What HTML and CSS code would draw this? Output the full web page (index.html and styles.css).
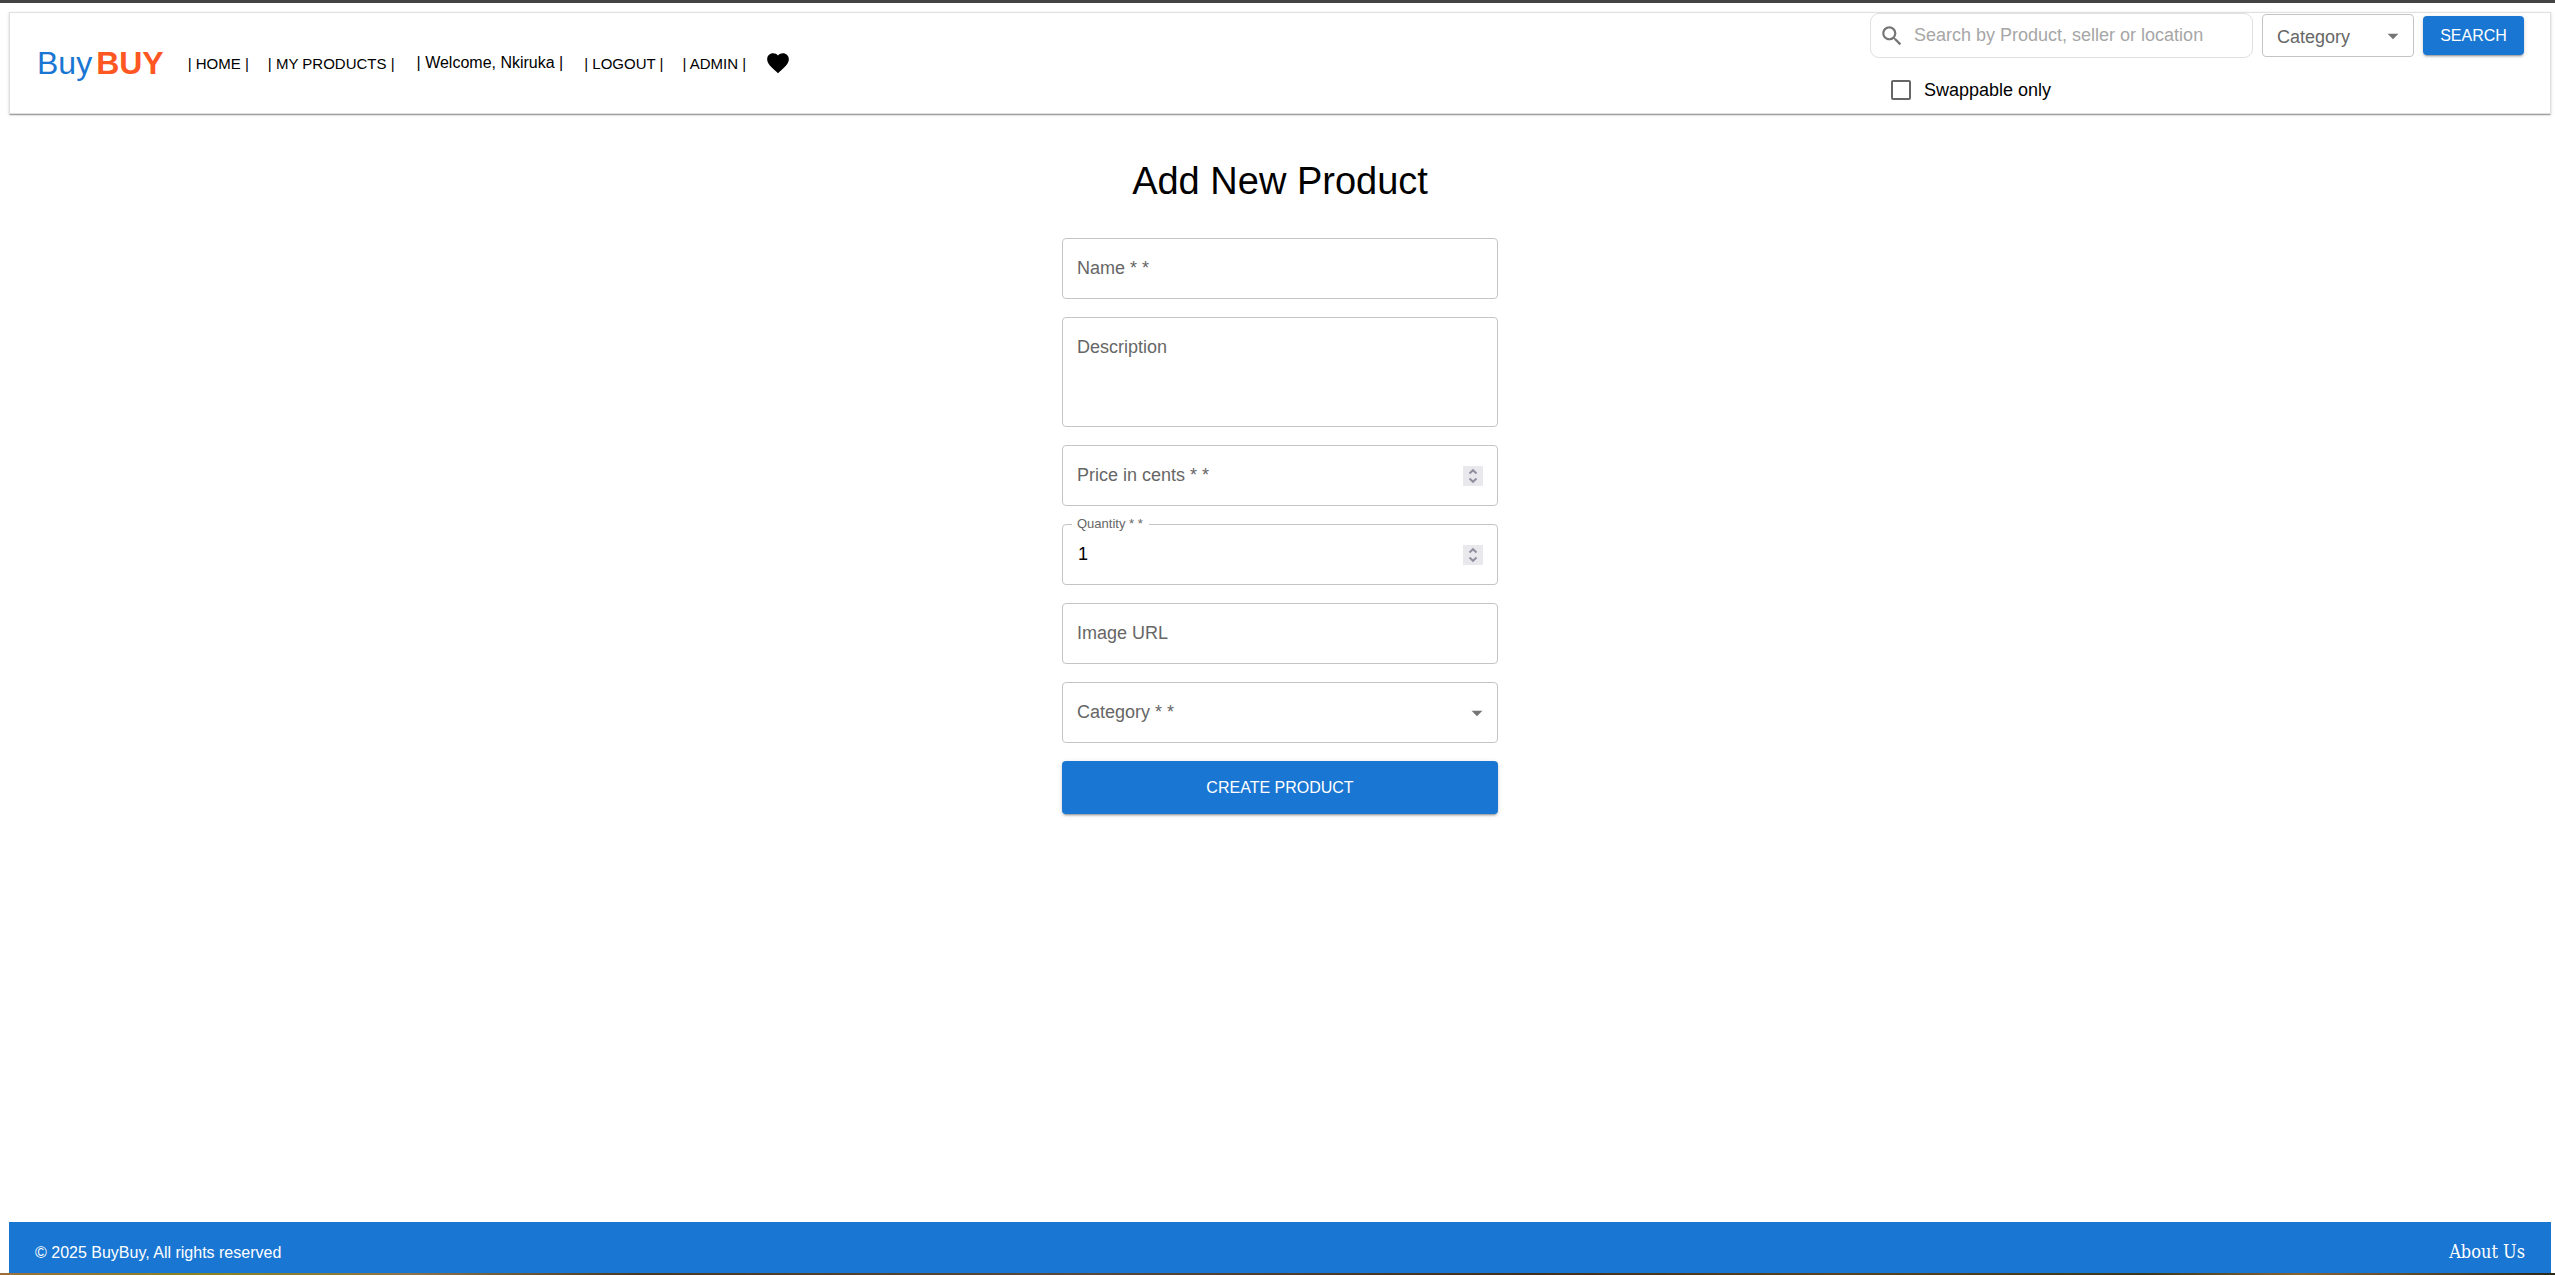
FILE: index.html
```html
<!DOCTYPE html>
<html lang="en">
<head>
  <meta charset="utf-8">
  <meta name="viewport" content="width=device-width, initial-scale=1">
  <title>BuyBuy - Add New Product</title>
  <link rel="stylesheet" href="styles.css">
</head>
<body>
  <div class="page">
    <header class="header">
      <a class="logo" href="#"><span class="logo-first">Buy</span><span class="logo-second">BUY</span></a>
      <nav class="nav">
        <a href="#">| HOME |</a>
        <a href="#">| MY PRODUCTS |</a>
        <span class="welcome">| Welcome, Nkiruka |</span>
        <a href="#">| LOGOUT |</a>
        <a href="#">| ADMIN |</a>
        <a class="wishlist" href="#" aria-label="Wishlist">
          <svg class="icon" viewBox="0 0 24 24"><path d="m12 21.35-1.45-1.32C5.4 15.36 2 12.28 2 8.5 2 5.42 4.42 3 7.5 3c1.74 0 3.41.81 4.5 2.09C13.09 3.81 14.76 3 16.5 3 19.58 3 22 5.42 22 8.5c0 3.78-3.4 6.86-8.55 11.54z"/></svg>
        </a>
      </nav>
      <form class="search">
        <div class="search-row">
          <label class="search-box">
            <svg class="icon muted" viewBox="0 0 24 24" aria-hidden="true"><path d="M15.5 14h-.79l-.28-.27C15.41 12.59 16 11.11 16 9.5 16 5.91 13.09 3 9.5 3S3 5.91 3 9.5 5.91 16 9.5 16c1.61 0 3.09-.59 4.23-1.57l.27.28v.79l5 4.99L20.49 19zm-6 0C7.01 14 5 11.99 5 9.5S7.01 5 9.5 5 14 7.01 14 9.5 11.99 14 9.5 14"/></svg>
            <input type="search" aria-label="Search" placeholder="Search by Product, seller or location">
          </label>
          <div class="field filter">
            <select id="filter-category"><option value=""></option><option>Electronics</option></select>
            <label for="filter-category">Category</label>
            <svg class="icon muted arrow" viewBox="0 0 24 24" aria-hidden="true"><path d="m7 10 5 5 5-5z"/></svg>
          </div>
          <button class="button search-button" type="button">SEARCH</button>
        </div>
        <label class="swappable"><input type="checkbox">Swappable only</label>
      </form>
    </header>

    <main class="main">
      <h1>Add New Product</h1>
      <form class="product-form">
        <div class="field">
          <input id="name" type="text">
          <label for="name">Name * *</label>
        </div>
        <div class="field multiline">
          <textarea id="description"></textarea>
          <label for="description">Description</label>
        </div>
        <div class="field">
          <input id="price" type="number">
          <label for="price">Price in cents * *</label>
          <svg class="stepper" viewBox="0 0 20 20" aria-hidden="true"><path d="M6.500 7.500 10 4.200l3.500 3.300M6.500 12.500l3.500 3.300 3.500-3.300"/></svg>
        </div>
        <div class="field filled">
          <input id="quantity" type="number" value="1">
          <label for="quantity">Quantity * *</label>
          <svg class="stepper" viewBox="0 0 20 20" aria-hidden="true"><path d="M6.500 7.500 10 4.200l3.500 3.300M6.500 12.500l3.500 3.300 3.500-3.300"/></svg>
        </div>
        <div class="field">
          <input id="image" type="text">
          <label for="image">Image URL</label>
        </div>
        <div class="field">
          <select id="category"><option value=""></option><option>Electronics</option></select>
          <label for="category">Category * *</label>
          <svg class="icon muted arrow" viewBox="0 0 24 24" aria-hidden="true"><path d="m7 10 5 5 5-5z"/></svg>
        </div>
        <button class="button create-button" type="button">CREATE PRODUCT</button>
      </form>
    </main>

    <footer class="footer">
      <span>© 2025 BuyBuy, All rights reserved</span>
      <a href="#">About Us</a>
    </footer>
  </div>
</body>
</html>
```

FILE: styles.css
```css
* {
  box-sizing: border-box;
}

body {
  margin: 0;
  background: #fff;
  color: #000;
  font-family: "Liberation Sans", Arial, sans-serif;
  font-size: 18px;
}

a {
  color: inherit;
  text-decoration: none;
}

input,
select,
textarea,
button {
  font: inherit;
  color: inherit;
}

.page {
  display: flex;
  flex-direction: column;
  min-height: 100vh;
  padding: 9px 4px 2px 9px;
  border-top: 3px solid #444;
  background: linear-gradient(90deg, #9a6f3c, #8a8420 8%, #8d744a 16%, #4a3a22 25%, #5a4a3c 42%, #43301c 60%, #5c4420 72%, #3a3a1c 84%, #8a6434 90%, #2a2a1a) bottom / 100% 2px no-repeat;
}

.header {
  display: flex;
  align-items: center;
  min-height: 102px;
  padding: 0 26px 0 27px;
  border: 1px solid #e0e0e0;
  box-shadow: 0 2px 1px -1px rgba(0, 0, 0, 0.2), 0 1px 1px 0 rgba(0, 0, 0, 0.14), 0 1px 3px 0 rgba(0, 0, 0, 0.12);
}

.logo {
  display: flex;
  gap: 4px;
  font-size: 32px;
  line-height: 40px;
}

.logo-first {
  color: #1976d2;
}

.logo-second {
  color: #ff5722;
  font-weight: 700;
}

.nav {
  display: flex;
  flex: 1;
  align-items: center;
  gap: 19px;
  padding-left: 24px;
  font-size: 15px;
  white-space: nowrap;
}

.welcome {
  padding: 0 2px 0 3px;
  font-size: 16px;
}

.icon {
  display: block;
  flex: none;
  width: 26px;
  height: 26px;
  fill: currentColor;
}

.muted {
  color: #757575;
}

.search {
  align-self: flex-start;
}

.search-row {
  display: flex;
  align-items: center;
  gap: 9px;
}

.search-box {
  display: flex;
  align-items: center;
  gap: 9px;
  width: 383px;
  height: 45px;
  padding: 0 8px;
  border: 1px solid #e0e0e0;
  border-radius: 9px;
}

.search-box input {
  flex: 1;
  min-width: 0;
  padding: 0;
  border: 0;
  outline: 0;
  background: none;
  appearance: none;
}

.search-box input::placeholder {
  color: #a6a6a6;
  opacity: 1;
}

.button {
  border: 0;
  border-radius: 4px;
  background: #1976d2;
  color: #fff;
  font-size: 16px;
  box-shadow: 0 3px 1px -2px rgba(0, 0, 0, 0.2), 0 2px 2px 0 rgba(0, 0, 0, 0.14), 0 1px 5px 0 rgba(0, 0, 0, 0.12);
}

.search-button {
  width: 101px;
  height: 39px;
}

.swappable {
  display: flex;
  align-items: center;
  gap: 13px;
  width: max-content;
  padding: 22px 0 0 21px;
  line-height: 20px;
}

.swappable input {
  width: 20px;
  height: 20px;
  margin: 0;
  border: 2px solid #666;
  border-radius: 2px;
  appearance: none;
}

/* Outlined field with its label laid over the control */
.field {
  position: relative;
  height: 61px;
}

.field input,
.field select,
.field textarea {
  display: block;
  width: 100%;
  height: 100%;
  padding: 0 15px;
  border: 1px solid #c4c4c4;
  border-radius: 4px;
  outline: 0;
  background: none;
  resize: none;
  appearance: none;
}

.field input[type="number"] {
  appearance: textfield;
}

.field label {
  position: absolute;
  top: 20px;
  left: 15px;
  color: #666;
  line-height: 20px;
  pointer-events: none;
}

.field.filled label {
  top: -10px;
  left: 10px;
  padding: 0 6px 0 5px;
  background: #fff;
  font-size: 13px;
}

.multiline {
  height: 110px;
}

.filter {
  width: 152px;
  height: 43px;
}

.filter label {
  top: 13px;
}

.arrow,
.stepper {
  position: absolute;
  top: 0;
  right: 8px;
  bottom: 0;
  margin: auto 0;
  pointer-events: none;
}

.stepper {
  right: 15px;
  width: 20px;
  height: 20px;
  background: #e9e9ed;
  fill: none;
  stroke: #8f8f9d;
  stroke-width: 2;
}

.main {
  flex: 1;
}

h1 {
  margin: 44px 0 34px;
  font-size: 38px;
  font-weight: 400;
  line-height: 46px;
  text-align: center;
}

.product-form {
  display: flex;
  flex-direction: column;
  gap: 18px;
  max-width: 436px;
  margin: 0 auto;
}

.create-button {
  height: 53px;
}

.footer {
  display: flex;
  align-items: baseline;
  justify-content: space-between;
  padding: 19px 26px 9px;
  background: #1976d2;
  color: #fff;
  font-size: 16px;
  line-height: 22px;
}

.footer a {
  font-family: "DejaVu Serif Condensed", "DejaVu Serif", serif;
  font-size: 18px;
}
```
